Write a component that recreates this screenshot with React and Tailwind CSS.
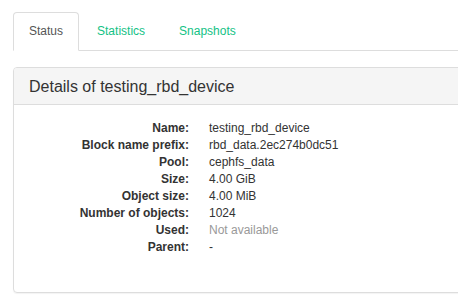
import React from "react";

const rows = [
  { label: "Name:", value: "testing_rbd_device" },
  { label: "Block name prefix:", value: "rbd_data.2ec274b0dc51" },
  { label: "Pool:", value: "cephfs_data" },
  { label: "Size:", value: "4.00 GiB" },
  { label: "Object size:", value: "4.00 MiB" },
  { label: "Number of objects:", value: "1024" },
  { label: "Used:", value: "Not available", muted: true },
  { label: "Parent:", value: "-" },
];

export default function App() {
  return (
    <div
      className="w-[458px] h-[306px] overflow-hidden bg-white text-[12px] text-[#333]"
      style={{ fontFamily: '"Liberation Sans", Arial, sans-serif' }}
    >
      <div className="w-[500px] pl-[13px] pt-[12px]">
        {/* Tabs */}
        <ul className="flex border-b border-[#ddd] leading-[17px]">
          <li className="mr-[2px] -mb-px">
            <a className="block px-[15px] py-[10px] border border-[#ddd] border-b-white rounded-t-[4px] bg-white text-[#555]">
              Status
            </a>
          </li>
          <li className="mr-[2px] -mb-px">
            <a className="block px-[15px] py-[10px] border border-transparent text-[#13c285]">
              Statistics
            </a>
          </li>
          <li className="mr-[2px] -mb-px">
            <a className="block px-[15px] py-[10px] border border-transparent text-[#13c285]">
              Snapshots
            </a>
          </li>
        </ul>

        {/* Panel */}
        <div className="mt-[16px] border border-[#ddd] rounded-[4px] shadow-[0_1px_1px_rgba(0,0,0,0.05)]">
          <div className="h-[37px] flex items-center px-[15px] pt-px bg-[#f5f5f5] border-b border-[#ddd] rounded-t-[3px] text-[16px] text-[#333]">
            Details of testing_rbd_device
          </div>
          <div className="px-[15px] pt-[15px] pb-[36px]">
            <dl className="leading-[17px]">
              {rows.map((r) => (
                <div key={r.label} className="flex">
                  <dt className="w-[160px] text-right font-bold">{r.label}</dt>
                  <dd className={"ml-[20px] " + (r.muted ? "text-[#999]" : "")}>{r.value}</dd>
                </div>
              ))}
            </dl>
          </div>
        </div>
      </div>
    </div>
  );
}
